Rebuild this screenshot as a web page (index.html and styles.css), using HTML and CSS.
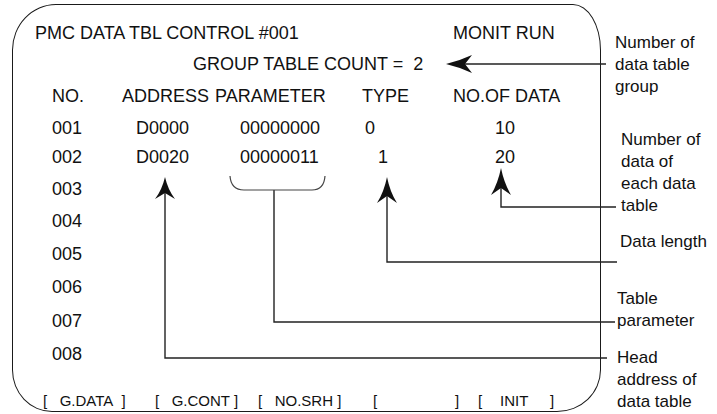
FILE: index.html
```html
<!DOCTYPE html>
<html>
<head>
    <title>PMC Data Table Control</title>
    <link rel="stylesheet" href="styles.css">
</head>
<body>
    <div id="page">
        <div class="screen">
            <div class="title-row">
                <span class="title">PMC DATA TBL CONTROL #001</span>
                <span>MONIT RUN</span>
            </div>
            <div class="count-row">GROUP TABLE COUNT =&nbsp; 2</div>

            <div class="table">
                <div class="row head">
                    <span>NO.</span>
                    <span>ADDRESS</span>
                    <span>PARAMETER</span>
                    <span class="type">TYPE</span>
                    <span class="num">NO.OF DATA</span>
                </div>
                <div class="row r1">
                    <span>001</span>
                    <span class="addr">D0000</span>
                    <span class="param">00000000</span>
                    <span class="type-val">0</span>
                    <span class="num-val">10</span>
                </div>
                <div class="row r2">
                    <span>002</span>
                    <span class="addr">D0020</span>
                    <span class="param">00000011</span>
                    <span class="type-val shift">1</span>
                    <span class="num-val">20</span>
                </div>
                <div class="row r3"><span>003</span></div>
                <div class="row r4"><span>004</span></div>
                <div class="row r5"><span>005</span></div>
                <div class="row r6"><span>006</span></div>
                <div class="row r7"><span>007</span></div>
                <div class="row r8"><span>008</span></div>
            </div>

            <div class="softkeys">
                <span class="key k1">[&nbsp;&nbsp; G.DATA&nbsp; ]</span>
                <span class="key k2">[&nbsp;&nbsp; G.CONT ]</span>
                <span class="key k3">[&nbsp;&nbsp; NO.SRH ]</span>
                <span class="key k4">[</span>
                <span class="key k5">]</span>
                <span class="key k6">[</span>
                <span class="key k7">INIT</span>
                <span class="key k8">]</span>
            </div>
        </div>

        <!-- callout lines and arrows -->
        <svg class="callouts" width="717" height="414" viewBox="0 0 717 414">
            <g fill="#111" stroke="none">
                <path d="M446,64 Q459,61 472,55 L465,64 L472,73 Q459,67 446,64 Z"/>
                <path d="M165,177 Q162,190 155,199 L165,193 L175,199 Q168,190 165,177 Z"/>
                <path d="M387,177 Q384,192 377,203 L387,196 L397,203 Q390,192 387,177 Z"/>
                <path d="M501,168 Q498,183 491,195 L501,188 L511,195 Q504,183 501,168 Z"/>
            </g>
            <g fill="none" stroke="#222" stroke-width="1.4">
                <path d="M465,64 H606"/>
                <path d="M165,193 V358 H607"/>
                <path d="M387,196 V262 H617"/>
                <path d="M501,188 V207 H616"/>
                <path d="M274,190 V322 H615"/>
            </g>
            <path d="M230,176 Q231,190 244,190 H312 Q324,190 325,176" fill="none" stroke="#444" stroke-width="1.2"/>
        </svg>

        <div class="note n1">Number of<br>data table<br>group</div>
        <div class="note n2">Number of<br>data of<br>each data<br>table</div>
        <div class="note n3">Data length</div>
        <div class="note n4">Table<br>parameter</div>
        <div class="note n5">Head<br>address of<br>data table</div>
    </div>
</body>
</html>
```

FILE: styles.css
```css
body {
    margin: 0;
    background-color: #fff;
    font-family: "Liberation Sans", Arial, sans-serif;
    color: #111;
}

#page {
    position: relative;
    width: 717px;
    height: 414px;
    overflow: hidden;
}

.screen {
    box-sizing: border-box;
    width: 589px;
    height: 408px;
    margin: 4px 0 0 12px;
    padding: 13px 0 0 22px;
    border: 1.5px solid #1a1a1a;
    border-radius: 44px 28px 44px 40px / 46px 46px 42px 42px;
    display: flex;
    flex-direction: column;
    font-size: 18px;
}

.title-row {
    display: flex;
    height: 30px;
    line-height: 30px;
}

.title {
    width: 418px;
}

.count-row {
    height: 32px;
    line-height: 32px;
    padding-left: 158px;
}

/* table grid */
.table {
    margin-left: 17px;
}

.row {
    display: grid;
    grid-template-columns: 70px 93px 140px 91px 1fr;
    align-items: center;
}

.head { height: 33px; }
.r1 { height: 30px; }
.r2 { height: 29px; }
.r3 { height: 34px; }
.r4 { height: 31px; }
.r5 { height: 34px; }
.r6 { height: 33px; }
.r7 { height: 34px; }
.r8 { height: 32px; }

.addr {
    padding-left: 14px;
}

.param {
    padding-left: 25px;
}

.type {
    padding-left: 7px;
}

.type-val {
    padding-left: 10px;
}

.type-val.shift {
    padding-left: 23px;
}

.num {
    padding-left: 7px;
}

.num-val {
    padding-left: 49px;
}

/* soft keys */
.softkeys {
    margin-top: auto;
    position: relative;
    height: 19px;
    line-height: 18px;
    font-size: 15px;
    margin-left: -22px;
}

.key {
    position: absolute;
    top: 0;
}

.k1 { left: 30px; }
.k2 { left: 142px; }
.k3 { left: 245px; }
.k4 { left: 360px; }
.k5 { left: 442px; }
.k6 { left: 465px; }
.k7 { left: 487px; }
.k8 { left: 537px; }

.callouts {
    position: absolute;
    top: 0;
    left: 0;
    pointer-events: none;
}

.note {
    position: absolute;
    font-size: 17px;
    line-height: 22px;
    color: #111;
}

.n1 { left: 615px; top: 32px; }
.n2 { left: 621px; top: 129px; }
.n3 { left: 620px; top: 231px; }
.n4 { left: 617px; top: 288px; }
.n5 { left: 617px; top: 347px; }
```
